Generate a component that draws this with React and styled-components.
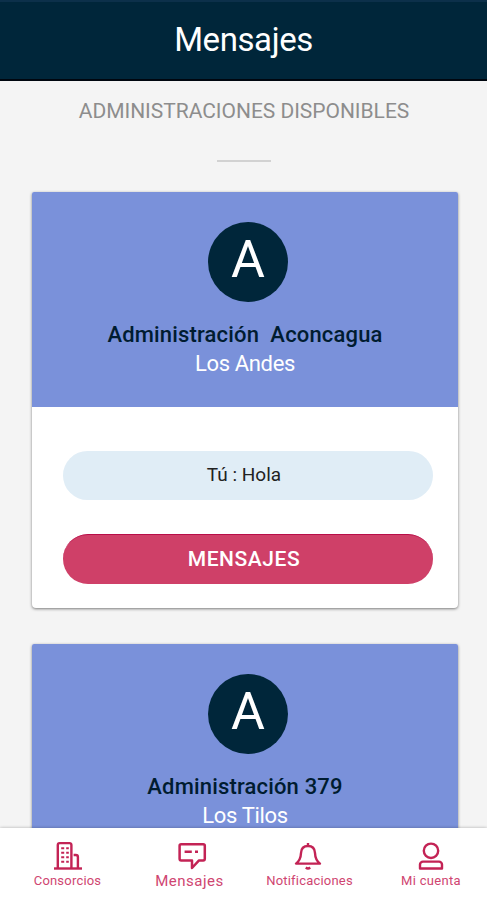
import React from 'react'
import styled, { createGlobalStyle } from 'styled-components'

const consorcios = [
  { id: 1, name: 'Administración\u00a0 Aconcagua', place: 'Los Andes', last: 'Tú : Hola' },
  { id: 2, name: 'Administración 379', place: 'Los Tilos' },
]

const BuildingIcon = () => (
  <svg width="30" height="30" viewBox="0 0 30 30" fill="none" stroke="#c32355" strokeWidth="2.4">
    <path d="M4.8 27V3.9a1.8 1.8 0 0 1 1.8-1.8h10a1.8 1.8 0 0 1 1.8 1.8V27" />
    <path d="M20.6 14h2.3a2 2 0 0 1 2 2v11" />
    <path d="M1 27.5h28" />
    <path d="M8.2 7.2h3M13.2 7.2h2.6M8.2 11.8h3M13.2 11.8h2.6M8.2 16.3h3M13.2 16.3h2.6M8.2 20.8h3M13.2 20.8h2.6" strokeWidth="2" />
  </svg>
)

const ChatIcon = () => (
  <svg width="30" height="30" viewBox="0 0 30 30" fill="none" stroke="#c32355" strokeWidth="2.5" strokeLinejoin="round">
    <path d="M4.2 3.2h22a1.6 1.6 0 0 1 1.6 1.6v13a1.6 1.6 0 0 1-1.6 1.6h-4.2l-7 7.6v-7.6H4.2a1.6 1.6 0 0 1-1.6-1.6v-13a1.6 1.6 0 0 1 1.6-1.6z" />
    <path d="M7.6 10.8h7.2M18 10.8h3" />
  </svg>
)

const BellIcon = () => (
  <svg width="30" height="30" viewBox="0 0 30 30" fill="none" stroke="#c32355" strokeWidth="2.4" strokeLinejoin="round">
    <path d="M15 2v3M15 5c-4.800 0-6.800 3-7 7-.2 5.500-1.500 8-5 10.600h24c-3.500-2.600-4.800-5.100-5-10.600-.2-4-2.200-7-7-7z" />
    <path d="M12.8 26.500q2.200 1.800 4.400 0" strokeWidth="2.4" />
  </svg>
)

const UserIcon = () => (
  <svg width="30" height="30" viewBox="0 0 30 30" fill="none" stroke="#c32355" strokeWidth="2.4">
    <circle cx="15" cy="9.8" r="7.2" />
    <path d="M4 27.500v-3.900a3 3 0 0 1 3-3h16a3 3 0 0 1 3 3v3.900z" strokeLinejoin="round" />
  </svg>
)

const tabs = [
  { label: 'Consorcios', icon: BuildingIcon, size: 13, spacing: '0.2px' },
  { label: 'Mensajes', icon: ChatIcon, size: 15, spacing: '0.5px', iconMargin: '0 0 0 4px' },
  { label: 'Notificaciones', icon: BellIcon, size: 13, spacing: '0.2px', iconMargin: '0 3px 0 0' },
  { label: 'Mi cuenta', icon: UserIcon, size: 13, spacing: '0.3px' },
]

export default function App() {
  return (
    <>
      <GlobalStyle />
      <Screen>
        <Header>
          <h1>Mensajes</h1>
        </Header>
        <Content>
          <Subtitle>ADMINISTRACIONES DISPONIBLES</Subtitle>
          <Divider />
          {consorcios.map((item) => (
            <Card key={item.id}>
              <CardTop>
                <Avatar>A</Avatar>
                <Name>{item.name}</Name>
                <Place>{item.place}</Place>
              </CardTop>
              {item.last && (
                <CardBody>
                  <LastMessage>{item.last}</LastMessage>
                  <Button>MENSAJES</Button>
                </CardBody>
              )}
            </Card>
          ))}
        </Content>
        <TabBar>
          {tabs.map(({ label, icon: Icon, size, spacing, iconMargin }) => (
            <Tab key={label} $size={size} $spacing={spacing} $iconMargin={iconMargin}>
              <Icon />
              <span>{label}</span>
            </Tab>
          ))}
        </TabBar>
      </Screen>
    </>
  )
}

const GlobalStyle = createGlobalStyle`
* {
  box-sizing: border-box;
}
body {
  margin: 0;
  font-family: Roboto, "Liberation Sans", sans-serif;
  background-color: #f4f4f4;
}
`

const Screen = styled.div`
  display: flex;
  flex-direction: column;
  width: 487px;
  height: 900px;
  overflow: hidden;
`

const Header = styled.header`
  flex: none;
  display: flex;
  justify-content: center;
  height: 81px;
  padding-top: 18px;
  background-color: #00263a;
  border-top: 2px solid #0c304a;
  border-bottom: 2px solid #00060f;
  h1 {
    margin: 0;
    font-size: 33px;
    line-height: 40px;
    font-weight: 400;
    letter-spacing: -0.4px;
    color: #fff;
  }
`

const Content = styled.main`
  flex: 1;
  min-height: 0;
  overflow: hidden;
  display: flex;
  flex-direction: column;
  align-items: center;
  padding: 17px 30px 0 31px;
`

const Subtitle = styled.h2`
  flex: none;
  margin: 0;
  font-size: 21px;
  line-height: 26px;
  font-weight: 400;
  letter-spacing: -0.03px;
  color: #8d8d8d;
  white-space: nowrap;
`

const Divider = styled.div`
  flex: none;
  width: 54px;
  height: 2px;
  margin: 36px 0 30px;
  background-color: #d2d2d2;
`

const Card = styled.section`
  flex: none;
  align-self: flex-start;
  width: 426px;
  height: 416px;
  margin: 0 0 36px 1px;
  border-radius: 2px 2px 4px 4px;
  overflow: hidden;
  background-color: #fff;
  box-shadow: 0 1px 3px rgba(0, 0, 0, 0.5);
`

const CardTop = styled.div`
  display: flex;
  flex-direction: column;
  align-items: center;
  height: 214.5px;
  padding-top: 30px;
  background-color: #7a91da;
`

const Avatar = styled.div`
  display: flex;
  justify-content: center;
  width: 80px;
  height: 80px;
  margin-left: 6px;
  border-radius: 50%;
  background-color: #00263a;
  color: #fff;
  font-size: 52px;
  line-height: 76px;
`

const Name = styled.div`
  margin-top: 18px;
  font-size: 22px;
  line-height: 30px;
  font-weight: 500;
  letter-spacing: 0.17px;
  color: #001c30;
`

const Place = styled.div`
  font-size: 22px;
  line-height: 28px;
  letter-spacing: -0.35px;
  color: #fff;
`

const CardBody = styled.div`
  display: flex;
  flex-direction: column;
  gap: 34px;
  padding: 44.5px 25px 0 31px;
`

const LastMessage = styled.div`
  height: 49px;
  padding-right: 8px;
  border-radius: 25px;
  background-color: #e0edf6;
  color: #222;
  font-size: 19px;
  line-height: 48px;
  text-align: center;
`

const Button = styled.button`
  height: 50px;
  padding: 0 8px 2px 0;
  border: none;
  border-top: 1px solid #b80d48;
  border-radius: 25px;
  background-color: #cf4068;
  color: #fff;
  font-family: inherit;
  font-size: 21px;
  font-weight: 500;
  letter-spacing: 0.55px;
  line-height: 46px;
  cursor: pointer;
`

const TabBar = styled.nav`
  flex: none;
  display: grid;
  grid-template-columns: 121px 123px 117px 126px;
  height: 72px;
  padding: 13px 0 0 7px;
  background-color: #fff;
  box-shadow: 0 0 3px rgba(0, 0, 0, 0.3);
  position: relative;
`

const Tab = styled.div`
  display: flex;
  flex-direction: column;
  align-items: center;
  color: #cf4571;
  font-size: ${({ $size }) => $size}px;
  letter-spacing: ${({ $spacing }) => $spacing};
  svg {
    display: block;
    margin: ${({ $iconMargin }) => $iconMargin || 0};
  }
  span {
    line-height: 20px;
    white-space: nowrap;
  }
`
